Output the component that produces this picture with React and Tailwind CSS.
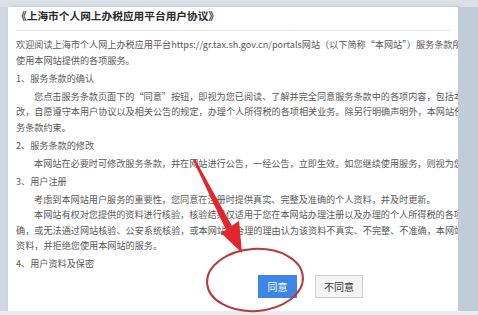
import React from 'react';

const lines = [
  { t: '欢迎阅读上海市个人网上办税应用平台https://gr.tax.sh.gov.cn/portals网站（以下简称“本网站”）服务条款所述的各项服务，', indent: false, gap: false },
  { t: '使用本网站提供的各项服务。', indent: false, gap: true },
  { t: '1、服务条款的确认', indent: false, gap: true },
  { t: '您点击服务条款页面下的“同意”按钮，即视为您已阅读、了解并完全同意服务条款中的各项内容，包括本网站对服务条款所作的修', indent: true, gap: false },
  { t: '改，自愿遵守本用户协议以及相关公告的规定，办理个人所得税的各项相关业务。除另行明确声明外，本网站任何服务均受本服', indent: false, gap: false },
  { t: '务条款约束。', indent: false, gap: true },
  { t: '2、服务条款的修改', indent: false, gap: true },
  { t: '本网站在必要时可修改服务条款，并在网站进行公告，一经公告，立即生效。如您继续使用服务，则视为您已接受修订的服务条款。', indent: true, gap: true },
  { t: '3、用户注册', indent: false, gap: true },
  { t: '考虑到本网站用户服务的重要性，您同意在注册时提供真实、完整及准确的个人资料，并及时更新。', indent: true, gap: false },
  { t: '本网站有权对您提供的资料进行核验，核验结果仅适用于您在本网站办理注册以及办理的个人所得税的各项业务。如您提供的资料不准', indent: true, gap: false },
  { t: '确，或无法通过网站核验、公安系统核验，或本网站有合理的理由认为该资料不真实、不完整、不准确，本网站有权暂停或终止您的注册', indent: false, gap: false },
  { t: '资料，并拒绝您使用本网站的服务。', indent: false, gap: true },
  { t: '4、用户资料及保密', indent: false, gap: false },
];

function Annotation() {
  return (
    <svg className="absolute left-0 top-0 pointer-events-none" width="478" height="315" viewBox="0 0 478 315">
      <ellipse cx="255" cy="280" rx="48" ry="31" fill="none" stroke="#b43a40" strokeWidth="2" transform="rotate(-4 255 280)" />
      <polygon points="193,160 195,159 232,226 226,230" fill="#e3262c" />
      <polygon points="242,253 221,233 239,221" fill="#e3262c" />
    </svg>
  );
}

export default function App() {
  return (
    <div
      lang="zh-CN"
      className="relative w-[478px] h-[315px] overflow-hidden bg-[#c6cfdb] flex flex-col"
      style={{ fontFamily: '"Noto Sans CJK SC", "Noto Sans", sans-serif' }}
    >
      <div className="h-[7px] bg-[#dbe1e9] shrink-0" />
      <div className="flex flex-1 min-h-0">
        <div className="w-[8px] bg-[#ced6e1] shrink-0" />
        <div className="w-[450px] bg-white overflow-hidden flex flex-col shadow-[2px_0_3px_rgba(80,100,130,0.35)]">
          <div className="mx-[8px] h-[24px] border-b border-[#e6e6e6] text-[10.7px] leading-[18px] font-bold text-[#2b2b2b] whitespace-nowrap">
            《上海市个人网上办税应用平台用户协议》
          </div>
          <div className="pl-[8px] pt-[6px] w-[700px] text-[9.15px] leading-[15.6px] text-[#5a5a5a]">
            {lines.map((l, i) => (
              <p
                key={i}
                className={
                  'whitespace-nowrap ' + (l.indent ? 'indent-[18px] ' : '') + (l.gap ? 'mb-[2.4px]' : '')
                }
              >
                {l.t}
              </p>
            ))}
          </div>
          <div className="flex gap-[18px] pl-[250px] mt-[3px]">
            <button className="w-[39px] h-[23px] bg-[#3d85e6] text-white text-[10px]">同意</button>
            <button className="w-[48px] h-[23px] bg-[#f4f4f4] border border-[#d0d0d0] text-[#333] text-[10px]">不同意</button>
          </div>
        </div>
        <div className="flex-1 bg-[#c2ccd9]" />
      </div>
      <div className="h-[4px] bg-[#eaecf0] shrink-0" />
      <Annotation />
    </div>
  );
}
